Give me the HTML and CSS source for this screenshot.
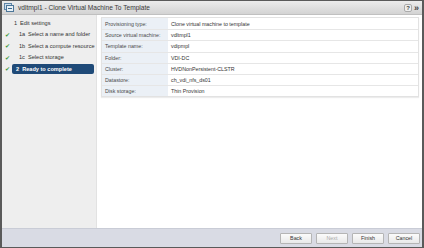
FILE: index.html
```html
<!DOCTYPE html>
<html>
<head>
<meta charset="utf-8">
<link rel="stylesheet" href="styles.css">
</head>
<body>
<div class="window">
  <div class="titlebar">
    <svg class="ticon" width="10" height="9" viewBox="0 0 10 9">
      <rect x="0.5" y="0.5" width="7" height="6" fill="#cfe0ee" stroke="#5f86a8"/>
      <rect x="2.5" y="2.5" width="7" height="6" fill="#e8f0f6" stroke="#4c7699"/>
      <path d="M4 5.5h4" stroke="#3b6a90"/>
    </svg>
    <span class="title">vdltmpl1 - Clone Virtual Machine To Template</span>
    <span class="tbtns">
      <span class="help">?</span>
      <span class="more">&#187;</span>
    </span>
  </div>
  <div class="main">
    <div class="nav">
      <div class="step head"><span class="chk"></span><span class="num">1</span><span>Edit settings</span></div>
      <div class="step sub"><span class="chk">&#10004;</span><span class="num">1a</span><span>Select a name and folder</span></div>
      <div class="step sub"><span class="chk">&#10004;</span><span class="num">1b</span><span>Select a compute resource</span></div>
      <div class="step sub"><span class="chk">&#10004;</span><span class="num">1c</span><span>Select storage</span></div>
      <div class="step active"><span class="chk">&#10004;</span><span class="bar"><span class="num">2</span><span>Ready to complete</span></span></div>
    </div>
    <div class="content">
      <div class="table">
        <div class="row"><span class="lbl">Provisioning type:</span><span class="val">Clone virtual machine to template</span></div>
        <div class="row"><span class="lbl">Source virtual machine:</span><span class="val">vdltmpl1</span></div>
        <div class="row"><span class="lbl">Template name:</span><span class="val">vdipmpl</span></div>
        <div class="row"><span class="lbl">Folder:</span><span class="val">VDI-DC</span></div>
        <div class="row"><span class="lbl">Cluster:</span><span class="val">HVDNonPersistent-CLSTR</span></div>
        <div class="row"><span class="lbl">Datastore:</span><span class="val">ch_vdi_nfs_ds01</span></div>
        <div class="row"><span class="lbl">Disk storage:</span><span class="val">Thin Provision</span></div>
      </div>
    </div>
  </div>
  <div class="footer">
    <span class="btn">Back</span>
    <span class="btn dis">Next</span>
    <span class="btn">Finish</span>
    <span class="btn">Cancel</span>
  </div>
</div>
</body>
</html>
```
FILE: styles.css
```css
* { box-sizing: border-box; }
html, body { margin: 0; padding: 0; }
body {
  width: 424px; height: 248px; overflow: hidden;
  font-family: "Liberation Sans", Arial, sans-serif;
  font-size: 5.3px;
  color: #333;
  background: #fff;
}
.window {
  width: 424px; height: 248px;
  display: flex; flex-direction: column;
  border: 1px solid #5a5a5a;
  border-width: 1px 2px 1px 2px;
  background: #fff;
}
.titlebar {
  height: 14px;
  display: flex; align-items: center;
  padding: 0 3px 0 2px;
  background: linear-gradient(#ececec, #d3d3d3);
  border-bottom: 1px solid #c0c0c0;
}
.ticon { flex: none; margin-right: 4px; }
.title { font-size: 6.6px; color: #3a3a3a; flex: 1; white-space: nowrap; }
.tbtns { display: flex; gap: 2px; align-items: center; }
.help {
  width: 8px; height: 8px; border-radius: 2px;
  background: #eee; border: 1px solid #aaa; color: #444;
  font-size: 6px; line-height: 6px; text-align: center; font-weight: bold;
}
.more { font-size: 9px; line-height: 8px; color: #444; font-weight: bold; }
.main { flex: 1; display: flex; min-height: 0; }
.nav {
  width: 95px; flex: none;
  background: #eeeeee;
  padding-top: 2px;
  border-right: 1px solid #e2e2e2;
  white-space: nowrap;
}
.step {
  height: 11.5px;
  display: flex; align-items: center;
  color: #333;
  font-size: 5.6px;
}
.chk { width: 12px; flex: none; color: #3f9a3f; font-size: 6px; padding-left: 3px; }
.head .num { width: 3px; margin-right: 3px; }
.step .num { margin-right: 3px; }
.sub .num { margin-left: 5px; width: 6px; }
.step.active { height: 11px; }
.bar {
  flex: 1; margin-right: 2px; margin-left: -2px;
  height: 10px; display: flex; align-items: center;
  background: #1f4a78; color: #fff; font-weight: bold;
  border-radius: 2px; padding-left: 4px;
}
.bar .num { margin-right: 3px; }
.content { flex: 1; padding: 2px 3px 0 4px; }
.table {
  border: 1px solid #e2e2e2;
  box-shadow: 0 1px 1px #ececec;
}
.row {
  height: 11.2px; display: flex;
  border-top: 1px solid #e6e6e6;
  white-space: nowrap;
}
.row:first-child { border-top: none; }
.lbl {
  width: 66px; flex: none;
  background: #ebf0f6;
  color: #4a4a4a;
  padding-left: 3px;
  display: flex; align-items: center;
}
.val { padding-left: 3px; display: flex; align-items: center; color: #333; }
.footer {
  height: 19px;
  background: #d9dbe4;
  border-top: 1px solid #c9ccd6;
  display: flex; justify-content: flex-end; align-items: center;
  gap: 4px; padding-right: 2px;
}
.btn {
  width: 32px; height: 11px;
  background: linear-gradient(#fbfbfb, #e9e9e9);
  border: 1px solid #b5b5b5;
  border-radius: 1px;
  display: flex; align-items: center; justify-content: center;
  color: #333;
}
.btn.dis { color: #aaa; }
```
